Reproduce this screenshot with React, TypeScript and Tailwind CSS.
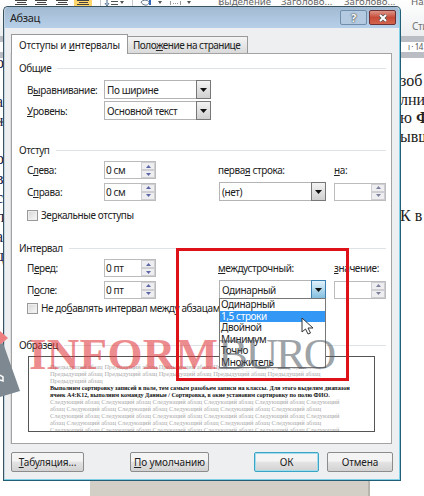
import React from 'react';

const serif = "font-['Liberation_Serif',serif]";

function Caption({ text, className = '' }: { text: string; className?: string }) {
  const parts = text.split('_');
  return (
    <span className={`whitespace-nowrap ${className}`}>
      {parts[0]}
      {parts.length > 1 && <span className="underline underline-offset-1">{parts[1][0]}</span>}
      {parts.length > 1 && parts[1].slice(1)}
    </span>
  );
}

function Section({ title, className = '' }: { title: string; className?: string }) {
  return (
    <div className={`flex h-3 shrink-0 items-center gap-1.5 ${className}`}>
      <span>{title}</span>
      <span className="h-px flex-1 bg-[#dde3e7]" />
    </div>
  );
}

function Combo({ value, width, hot }: { value: string; width: string; hot?: boolean }) {
  return (
    <div className={`flex h-[19px] shrink-0 items-center border border-[#b4b4b4] bg-white ${width}`}>
      <span className="flex-1 pl-[2px] whitespace-nowrap">{value}</span>
      <span className={`-mr-px flex h-[19px] w-[15px] items-center justify-center border ${hot ? 'border-[#3c7fb1] bg-linear-to-b from-[#e0f2fc] to-[#83bfdf]' : 'border-[#777] bg-linear-to-b from-[#f3f3f3] to-[#d0d0d0]'}`}>
        <svg width="7" height="4" viewBox="0 0 7 4"><path d="M0 0h7L3.5 4z" fill="#111" /></svg>
      </span>
    </div>
  );
}

function Spin({ value, disabled }: { value: string; disabled?: boolean }) {
  return (
    <div className="flex h-[18px] w-[52px] shrink-0 items-center border border-[#bcbcbc] bg-white">
      <span className="flex-1 pl-px whitespace-nowrap">{value}</span>
      <span className="flex w-[14px] flex-col">
        {['M0 3h5L2.5 0z', 'M0 0h5L2.5 3z'].map((d) => (
          <span key={d} className="flex h-2 items-center justify-center border border-[#cfcfd3] bg-[#eeeef1]">
            <svg width="5" height="3" viewBox="0 0 5 3"><path d={d} fill={disabled ? '#7d819b' : '#5c65a5'} /></svg>
          </span>
        ))}
      </span>
    </div>
  );
}

function Check({ text }: { text: string }) {
  return (
    <div className="flex h-3 items-center gap-[3px]">
      <span className="size-[11px] border border-[#999] bg-linear-to-br from-[#d5d5d5] to-[#fafafa] shadow-[inset_0_0_0_1px_#eee]" />
      <Caption text={text} />
    </div>
  );
}

function Button({ text, className }: { text: string; className: string }) {
  return (
    <div className={`flex h-5 shrink-0 items-center justify-center rounded-[2px] border bg-linear-to-b from-[#f4f4f4] from-45% via-[#e4e4e4] via-50% to-[#d2d2d2] tracking-[-0.100px] ${className}`}>
      <Caption text={text} />
    </div>
  );
}

function AlignIcon({ active }: { active?: boolean }) {
  return (
    <span className={`flex h-[7px] w-[18px] justify-center ${active ? 'border-b border-[#c9962d] bg-[#ffd569]' : ''}`}>
      <svg width="12" height="7"><path d="M0 .5h12M2 2.5h9M0 4.5h12" stroke="#444" strokeWidth="1" /></svg>
    </span>
  );
}

function Ribbon() {
  return (
    <div className="absolute inset-x-0 top-0 h-[36px] bg-linear-to-b from-white to-[#eceef0]">
      <div className="flex h-[7px] pl-[12px]">
        <AlignIcon /><span className="w-[2px]" /><AlignIcon /><span className="w-[3px]" /><AlignIcon /><span className="w-[3px]" /><AlignIcon active />
        <svg className="ml-2" width="125" height="7" fill="none">
          <path d="M.5 0v7M120.500 0v7M32.500 0v7" stroke="#c5c8cc" />
          <path d="M7 0v4M5 3l2 3l2-3" stroke="#45658b" />
          <path d="M11 1.500h7M11 4.500h7" stroke="#555" />
          <path d="M20 1h4l-2 3zM58 1h4l-2 3zM87 1h4l-2 3z" fill="#555" />
          <path d="M41 2c2-3 9-2 8 1s-6 3-8-1z" stroke="#63758d" />
          <path d="M50 0v5" stroke="#3265b5" strokeWidth="2" />
          <path d="M70.500 1v4M80.500 1v4M73 3.500h1M75 3.500h1M77 3.500h1" stroke="#999" />
        </svg>
      </div>
      <div className="absolute -top-[5px] left-[218px] flex text-[9.700px] leading-[14px] tracking-normal whitespace-nowrap text-[#666]">
        <span className="w-[63px] shrink-0">Выделение</span><span className="w-[63px] shrink-0">Заголово...</span><span className="w-[67px] shrink-0">Заголово...</span><span>Наз</span>
      </div>
      <span className="absolute top-5 left-[412px] text-[10px] text-[#777]">Сти</span>
    </div>
  );
}

function DocumentBackdrop() {
  return (
    <>
      <div className="absolute inset-x-0 top-[36px] h-[22px] bg-[#babec4] pt-[6px]">
        <div className="flex h-[10px] items-center justify-end bg-white pr-px text-[8px] text-[#555]">ı · 14</div>
      </div>
      <div className={`absolute top-[72px] left-[400px] flex flex-col text-[16px] leading-[18.700px] tracking-normal whitespace-nowrap text-[#222] ${serif}`}>
        <span>зоб</span><span>лни</span><span>ю <b>Ф</b></span><span>ывш</span>
        <span className="mt-[60px]">К в</span>
      </div>
      <div className={`absolute top-[53px] left-0 flex flex-col text-[16px] leading-[19.300px] text-[#172348] ${serif}`}>
        {['о', '', 'а', 'ж', '', 'о', 'в', 'с', 'п', 'а', 'д'].map((c, i) => <span key={i} className="-ml-[4px] h-[19.300px]">{c}</span>)}
      </div>
      <div className="absolute top-[481px] left-[90px] h-[15px] w-[280px] border-r-2 border-[#b9b6b0] bg-[#d3cec6]" />
    </>
  );
}

const repeat = (phrase: string, count: number) => Array(count).fill(phrase).join(' ');
const prev = repeat('Предыдущий абзац', 5);
const next = repeat('Следующий абзац', 5);

function Preview() {
  return (
    <div className={`mx-4 mt-[5px] h-[76px] shrink-0 overflow-hidden border border-[#555] pt-[7px] pl-[21px] text-[6.400px] leading-[6.950px] tracking-normal whitespace-nowrap text-[#aaa] ${serif}`}>
      <div>{prev}</div>
      <div>{prev}</div>
      <div>Предыдущий абзац</div>
      <div className="text-[6.150px] font-bold text-[#111]">Выполним сортировку записей в поле, тем самым разобьем записи на классы. Для этого выделим диапазон</div>
      <div className="text-[6.050px] font-bold text-[#111]">ячеек A4:K12, выполним команду Данные / Сортировка, в окне установим сортировку по полю ФИО.</div>
      <div>{next} Следующий</div>
      <div>абзац {next}</div>
      <div>{next} Следующий</div>
      <div>абзац {next}</div>
      <div>{next} Следующий</div>
    </div>
  );
}

function Dialog() {
  return (
    <div className="absolute top-[6px] left-[3px] flex h-[475px] w-[398px] flex-col rounded-t-[5px] border border-[#38525f] border-r-[#205f75] border-b-[#205f75] bg-[#eeeff0] px-[7px] shadow-[inset_-1px_-1px_#7fd0e6,inset_1px_0_#c3d3df]">
      <div className="-mx-[6px] flex h-[21px] shrink-0 rounded-t-[4px] bg-linear-to-b from-[#a2bad2] to-[#b7d0e9] pr-[3px] pl-[5px]">
        <span className="flex-1 pt-[3px] text-[11px] leading-[15px]">Абзац</span>
        <span className="mt-[3px] flex h-[15px] w-[27px] items-center justify-center rounded-[2px] border border-[#708dac] bg-[#b4cae0] text-[11px] font-bold text-white [text-shadow:0_0_2px_#333,0_0_1px_#333]">?</span>
        <span className="mt-[3px] ml-[2px] flex h-[15px] w-[27px] items-center justify-center rounded-[2px] border border-[#6d3033] bg-linear-to-b from-[#dc9588] via-[#c74a38] to-[#d4644c]">
          <svg width="10" height="8"><path d="M2 1l6 6M8 1L2 7" stroke="#555" strokeWidth="3.500" /><path d="M2 1l6 6M8 1L2 7" stroke="white" strokeWidth="2" /></svg>
        </span>
      </div>
      <div className="mt-[6px] flex h-[19px] shrink-0 items-end">
        <div className="z-10 -mb-px flex h-[20px] w-[117px] items-center border border-b-0 border-[#999] bg-white pl-[7px]"><Caption text="Отступы и _интервалы" className="tracking-[-0.220px]" /></div>
        <div className="flex h-[17px] w-[120px] items-center border border-b-0 border-l-0 border-[#999] bg-linear-to-b from-[#f4f4f4] to-[#dadada] pl-[5px]"><Caption text="Поло_жение на странице" className="tracking-[-0.500px]" /></div>
      </div>
      <div className="flex h-[391px] w-[381px] shrink-0 flex-col border border-[#a3a3a3] bg-white shadow-[-1px_0_#ddd]">
        <Section title="Общие" className="mt-[8px] mr-[5px] ml-[7px]" />
        <div className="mt-[6px] ml-[15px] flex items-center"><Caption text="В_ыравнивание:" className="w-[77px]" /><Combo value="По ширине" width="w-[107px]" /></div>
        <div className="mt-[2px] ml-[15px] flex items-center"><Caption text="_Уровень:" className="w-[77px]" /><Combo value="Основной текст" width="w-[107px]" /></div>
        <Section title="Отступ" className="mt-[24px] mr-[5px] ml-[7px]" />
        <div className="mt-[5px] ml-[15px] flex items-center"><Caption text="С_лева:" className="w-[77px]" /><Spin value="0 см" /><Caption text="перва_я строка:" className="ml-[62px] w-[116px]" /><Caption text="_на:" /></div>
        <div className="mt-[3px] ml-[15px] flex items-center"><Caption text="С_права:" className="w-[77px]" /><Spin value="0 см" /><span className="w-[63px]" /><Combo value="(нет)" width="w-[107px]" /><span className="w-[8px]" /><Spin value="" disabled /></div>
        <div className="mt-[8px] ml-[15px]"><Check text="Зе_ркальные отступы" /></div>
        <Section title="Интервал" className="mt-[21px] mr-[5px] ml-[7px]" />
        <div className="mt-[5px] ml-[15px] flex items-center"><Caption text="П_еред:" className="w-[77px]" /><Spin value="0 пт" /><Caption text="_междустрочный:" className="ml-[62px] w-[116px]" /><Caption text="_значение:" /></div>
        <div className="mt-[3px] ml-[15px] flex items-center"><Caption text="П_осле:" className="w-[77px]" /><Spin value="0 пт" /><span className="w-[63px]" /><Combo value="Одинарный" width="w-[107px]" hot /><span className="w-[8px]" /><Spin value="" disabled /></div>
        <div className="mt-[3px] ml-[15px]"><Check text="Не до_бавлять интервал между абзацам" /></div>
        <Section title="Образец" className="mt-[25px] mr-[5px] ml-[7px]" />
        <Preview />
      </div>
      <div className="mt-[8px] flex">
        <Button text="_Табуляция..." className="w-[73px] border-[#8c8c8c]" />
        <Button text="_По умолчанию" className="ml-[46px] w-[79px] border-[#8c8c8c]" />
        <Button text="ОК" className="ml-[45px] w-[65px] border-[#3ba5c5] shadow-[inset_0_0_0_1px_#a5dced]" />
        <Button text="Отмена" className="ml-[8px] w-[66px] border-[#8c8c8c]" />
      </div>
    </div>
  );
}

function Dropdown() {
  return (
    <div className="absolute top-[298px] left-[219px] h-[70px] w-[107px] border border-[#777] bg-white leading-[11.500px]">
      {['Одинарный', '1,5 строки', 'Двойной', 'Минимум', 'Точно', 'Множитель'].map((s, i) => (
        <div key={s} className={`h-[11.500px] pl-[1px] ${i === 1 ? 'bg-[#3297f5] text-white' : ''}`}>{s}</div>
      ))}
    </div>
  );
}

function Watermark() {
  return (
    <>
      <svg className="absolute top-[325px] left-0" width="24" height="80">
        <path d="M0 6l8 7l-8 7z" fill="#ee7f80" />
        <path d="M0 19l3-1L20 66L0 72z" fill="#7d8891" />
        <path d="M0 50l3 2v4l-3-1" fill="none" stroke="white" strokeWidth="1.500" />
      </svg>
      <div className={`absolute top-[329px] left-[29px] flex text-[45px] leading-[50px] opacity-55 ${serif}`}>
        <span className="w-[189px] text-[#df3035] font-bold tracking-[0.300px]">INFORM</span><span className="tracking-[-2.300px] text-[#505861]">BURO</span>
      </div>
    </>
  );
}

export default function App() {
  return (
    <main className="relative h-[496px] w-[424px] overflow-hidden bg-white font-['Noto_Sans',sans-serif] text-[10px] leading-[12px] tracking-[-0.400px] text-[#222]">
      <DocumentBackdrop />
      <Ribbon />
      <Dialog />
      <Dropdown />
      <Watermark />
      <div className="absolute top-[248px] left-[176px] h-[133px] w-[173px] border-3 border-[#df1118]" />
      <svg className="absolute top-[317px] left-[301px]" width="13" height="19" viewBox="0 0 13 19"><path d="M1 1v14l3.500-3l2.500 5l2.500-1l-2.500-5h5z" fill="white" stroke="#333" /></svg>
    </main>
  );
}
